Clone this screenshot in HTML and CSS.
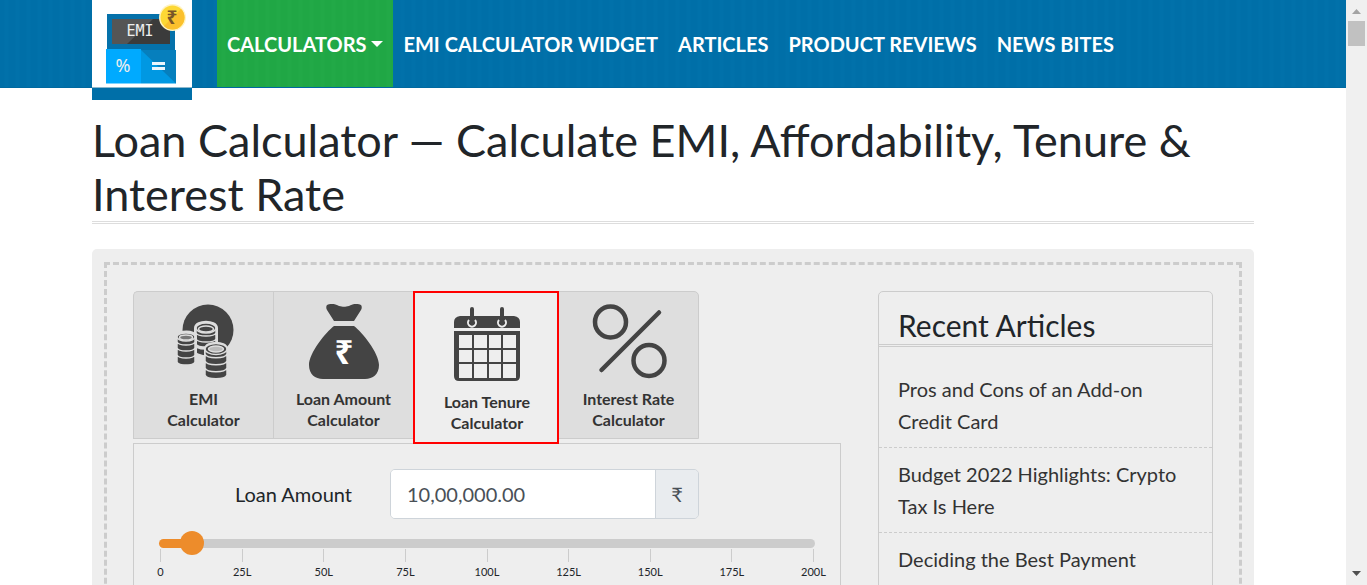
FILE: index.html
```html
<!DOCTYPE html>
<html lang="en">
<head>
<meta charset="utf-8">
<meta name="viewport" content="width=device-width, initial-scale=1">
<title>Loan Calculator</title>
<link rel="stylesheet" href="styles.css">
</head>
<body>
<div class="page">
  <header class="site-header">
    <div class="container header-row">
      <a class="brand" href="#" aria-label="EMI Calculator home">
        <svg class="brand-logo" viewBox="0 0 100 87" aria-hidden="true">
          <path fill="#0571aa" d="M15 14h68v36H15z"/>
          <path fill="#555" d="M20 19h58v25H20z"/>
          <path fill="#3b3b3b" d="M35 44l26-25h17v25z"/>
          <path fill="#00aaff" d="M14 49h35v34.500H14z"/>
          <path fill="#0098e2" d="M49 50h35v33.500H49z"/>
          <path fill="#067fbd" d="M49 50h35v33.500z"/>
          <path fill="#e9f6fd" d="M60 62h13v3H60zM60 67h13v3H60z"/>
          <circle cx="80.500" cy="17.500" r="13.500" fill="#fff3c4"/>
          <circle cx="80.500" cy="17.500" r="12" fill="#fdd835"/>
          <path fill="#fbc02d" d="M72 26a12 12 0 0 0 17-17z"/>
          <text class="logo-rupee" x="80" y="24">₹</text>
          <text class="logo-emi" x="48" y="36">EMI</text>
          <text class="logo-percent" x="31" y="72">%</text>
        </svg>
      </a>
      <nav class="main-nav">
        <a class="nav-link nav-active" href="#">CALCULATORS<span class="caret"></span></a>
        <a class="nav-link" href="#">EMI CALCULATOR WIDGET</a>
        <a class="nav-link" href="#">ARTICLES</a>
        <a class="nav-link" href="#">PRODUCT REVIEWS</a>
        <a class="nav-link" href="#">NEWS BITES</a>
      </nav>
    </div>
  </header>

  <main class="container">
    <h1 class="page-title">Loan Calculator — Calculate EMI, Affordability, Tenure &amp; Interest Rate</h1>
    <div class="card">
      <div class="card-inner">
        <section class="calculator">
          <div class="tabs">
            <button class="tab" type="button">
              <svg class="tab-icon" viewBox="0 0 76 76" aria-hidden="true">
                <circle cx="42" cy="26" r="25.500" fill="#444"/>
                <g fill="#444" stroke="#dedede" stroke-width="1.500">
                  <path stroke-width="4" d="M30 24c0-7 20-7 20 0v16c0 5-20 5-20 0z"/>
                  <path d="M30 36v4c2 4 18 4 20 0v-4M30 31v4c2 4 18 4 20 0v-4M30 24v5c2 4 18 4 20 0v-5"/>
                  <ellipse cx="40" cy="24" rx="10" ry="5"/>
                  <ellipse cx="40" cy="25" rx="7.500" ry="3"/>
                  <path stroke-width="4" d="M12 33c0-6 17-6 17 0v24c0 5-17 5-17 0z"/>
                  <path d="M11 52v6c2 4 16 4 18 0v-6M11 46v5c2 4 16 4 18 0v-5M11 39v5c2 4 16 4 18 0v-5M11 33v5c2 4 16 4 18 0v-5"/>
                  <ellipse cx="20" cy="33" rx="9" ry="4"/>
                  <ellipse cx="20" cy="33.500" rx="6.500" ry="2.500" fill="#777"/>
                  <path stroke-width="4" d="M40 45c0-7 20-7 20 0v25c0 6-20 6-20 0z"/>
                  <path d="M39 65v6c2 5 20 5 22 0v-6M39 58v6c2 5 20 5 22 0v-6M39 51v6c2 5 20 5 22 0v-6M39 45v5c2 5 20 5 22 0v-5"/>
                  <ellipse cx="50" cy="45" rx="11" ry="5.500"/>
                  <ellipse cx="50" cy="45" rx="7.500" ry="3" fill="#bbb"/>
                </g>
              </svg>
              <span>EMI<br>Calculator</span>
            </button>
            <button class="tab" type="button">
              <svg class="tab-icon" viewBox="0 0 76 76" aria-hidden="true">
                <path fill="#444" d="M21 1c5-2 8-1 12 1 4 1 6 1 10 0 4-2 7-3 12-1 1 1 1 3 0 5l-7 11H28L21 6c-1-2-1-4 0-5zM28 22h20c8 6 25 27 25 39 0 9-6 14-14 14H17C9 75 3 70 3 61c0-12 17-33 25-39z"/>
                <text class="bag-rupee" x="38" y="60">₹</text>
              </svg>
              <span>Loan Amount<br>Calculator</span>
            </button>
            <button class="tab tab-selected" type="button">
              <svg class="tab-icon" viewBox="0 0 76 76" aria-hidden="true">
                <path fill="#444" d="M11 9h54q6 1 6 6v6H5v-6q0-5 6-6z"/>
                <path fill="#444" fill-rule="evenodd" d="M5 24h66v45q0 5-5 5H10q-5 0-5-5zM10 28v13h13V28zM25 28v13h13V28zM40 28v13h12V28zM54 28v13h13V28zM10 43v12h13V43zM25 43v12h13V43zM40 43v12h12V43zM54 43v12h13V43zM10 57v14h13V57zM25 57v14h13V57zM40 57v14h12V57zM54 57v14h13V57z"/>
                <g fill="none" stroke="#eee" stroke-width="2">
                  <path d="M20 13a4 4 0 1 0 6 0M50 13a4 4 0 1 0 6 0"/>
                </g>
                <path d="M23 2v14M53 2v14" stroke="#444" stroke-width="4" stroke-linecap="round"/>
              </svg>
              <span>Loan Tenure<br>Calculator</span>
            </button>
            <button class="tab" type="button">
              <svg class="tab-icon" viewBox="0 0 76 76" aria-hidden="true">
                <g fill="none" stroke="#444" stroke-width="4.500" stroke-linecap="round">
                  <circle cx="19.500" cy="18" r="15.500"/>
                  <circle cx="58" cy="56.500" r="15.500"/>
                  <path d="M68 8.500L10.500 66"/>
                </g>
              </svg>
              <span>Interest Rate<br>Calculator</span>
            </button>
          </div>

          <form class="panel">
            <div class="field-row">
              <label class="field-label" for="amount">Loan Amount</label>
              <div class="input-group">
                <input class="amount" id="amount" type="text" value="10,00,000.00">
                <span class="addon">₹</span>
              </div>
            </div>
            <div class="slider">
              <div class="slider-track">
                <input class="slider-input" type="range" min="0" max="200" value="10" aria-label="Loan amount in lakhs">
              </div>
              <div class="scale">
                <span class="mark">0</span>
                <span class="mark">25L</span>
                <span class="mark">50L</span>
                <span class="mark">75L</span>
                <span class="mark">100L</span>
                <span class="mark">125L</span>
                <span class="mark">150L</span>
                <span class="mark">175L</span>
                <span class="mark">200L</span>
              </div>
            </div>
          </form>
        </section>

        <aside class="articles">
          <h3 class="articles-title">Recent Articles</h3>
          <ul class="article-list">
            <li class="article"><a href="#">Pros and Cons of an Add-on Credit Card</a></li>
            <li class="article"><a href="#">Budget 2022 Highlights: Crypto Tax Is Here</a></li>
            <li class="article"><a href="#">Deciding the Best Payment</a></li>
          </ul>
        </aside>
      </div>
    </div>
  </main>
</div>

<div class="scrollbar" aria-hidden="true">
  <svg class="scroll-arrow" viewBox="0 0 21 21"><path fill="#a3a3a3" d="M6 14l4.500-5 4.500 5z"/></svg>
  <div class="scroll-thumb"></div>
  <svg class="scroll-arrow scroll-down" viewBox="0 0 21 21"><path fill="#505050" d="M6 7l4.500 5L15 7z"/></svg>
</div>
</body>
</html>
```
FILE: styles.css
```css
* {
  box-sizing: border-box;
}

body {
  display: flex;
  height: 100vh;
  margin: 0;
  overflow: hidden;
  background: #fff;
  color: #212529;
  font: 20px/32px Lato, "Noto Sans", sans-serif;
}

a {
  color: inherit;
  text-decoration: none;
}

.page {
  flex: 1;
  min-width: 0;
  overflow-y: auto;
  scrollbar-width: none;
}

.container {
  max-width: 1162px;
  margin: 0 auto;
}

/* Header */
.site-header {
  height: 88px;
  background: repeating-linear-gradient(90deg, #006fa8 0 4px, #0171aa 5px 8px, #006fa8 9px 11px);
  border-bottom: 1px solid #0069a0;
}

.header-row {
  display: flex;
  gap: 25px;
  height: 87px;
}

.brand {
  flex: none;
  width: 100px;
  height: 100px;
  background: #006fa8;
}

.brand-logo {
  display: block;
  width: 100px;
  height: 87px;
  background: #fff;
  box-shadow: 0 1px #8db8cd;
}

.logo-emi,
.logo-percent,
.logo-rupee {
  fill: #eee;
  text-anchor: middle;
  font-family: "DejaVu Sans Mono", monospace;
  font-size: 15px;
}

.logo-percent {
  font-family: "Noto Sans", sans-serif;
  font-size: 18px;
}

.logo-rupee {
  fill: #795528;
  font-family: "Noto Sans", sans-serif;
  font-weight: 700;
  font-size: 19px;
}

.main-nav {
  display: flex;
}

.nav-link {
  display: flex;
  align-items: center;
  padding: 0 10px;
  color: #fff;
  font-weight: 700;
  white-space: nowrap;
}

.nav-active {
  background: repeating-linear-gradient(90deg, #20a745 0 4px, #22a947 5px 8px, #20a745 9px 11px);
}

.caret {
  margin-left: 5px;
  border: 6px solid transparent;
  border-top-color: #fff;
  border-bottom: 0;
}

/* Title */
.page-title {
  margin: 25px 0;
  border-bottom: 3px double #ddd;
  font-size: 45px;
  font-weight: 400;
  line-height: 54px;
}

/* Card */
.card {
  padding: 13px 12px;
  background: #eee;
  border-radius: 5px;
}

.card-inner {
  display: grid;
  grid-template-columns: minmax(0, 708fr) minmax(0, 335fr);
  gap: 37px;
  padding: 26px;
  border: 3px dashed #ccc;
}

/* Tabs */
.tabs {
  display: flex;
  align-items: flex-start;
  height: 152px;
}

.tab {
  display: flex;
  flex-direction: column;
  align-items: center;
  width: 140px;
  height: 148px;
  margin: 0;
  padding: 12px 0 0;
  border: 1px solid #ccc;
  border-right: 0;
  background: #dedede;
  color: #333;
  font: 700 16px/21px Lato, "Noto Sans", sans-serif;
}

.tab:first-child {
  border-radius: 5px 0 0 0;
}

.tab:last-child {
  width: 141px;
  border-right: 1px solid #ccc;
  border-radius: 0 5px 0 0;
}

.tab-icon {
  width: 76px;
  height: 76px;
  margin-bottom: 8px;
}

.tab-selected {
  position: relative;
  width: 146px;
  height: 153px;
  margin-right: -1px;
  padding: 14px 0 0 2px;
  border: 2px solid #f00;
  background: #eee;
}

.bag-rupee {
  fill: #fff;
  text-anchor: middle;
  font-family: "Noto Sans", sans-serif;
  font-weight: 700;
  font-size: 33px;
}

/* Panel */
.panel {
  min-height: 220px;
  padding: 25px;
  border: 1px solid #ccc;
}

.field-row {
  display: grid;
  grid-template-columns: 1fr 309px;
  gap: 38px;
  margin-right: 116px;
}

.field-label {
  align-self: center;
  text-align: right;
}

.input-group {
  display: flex;
  height: 50px;
  overflow: hidden;
  border: 1px solid #ced4da;
  border-radius: 5px;
  color: #495057;
}

.amount {
  flex: 1;
  min-width: 0;
  padding: 0 16px;
  border: 0;
  background: #fff;
  color: inherit;
  font: inherit;
}

.addon {
  display: grid;
  place-items: center;
  width: 43px;
  border-left: 1px solid #ced4da;
  background: #e9ecef;
}

/* Slider */
.slider {
  margin-top: 20px;
}

.slider-track {
  height: 9px;
  border-radius: 5px;
  background: linear-gradient(90deg, #ed8c2b 5%, #ccc 5%);
}

.slider-input {
  display: block;
  width: calc(100% + 24px);
  height: 24px;
  margin: 0 -12px;
  appearance: none;
  background: transparent;
  translate: 0 -8px;
}

.slider-input::-webkit-slider-thumb {
  width: 24px;
  height: 24px;
  appearance: none;
  border-radius: 50%;
  background: #ed8c2b;
}

.scale {
  display: flex;
  justify-content: space-between;
  margin: 0 1px;
}

.mark {
  display: flex;
  flex-direction: column;
  align-items: center;
  width: 1px;
  font-size: 11px;
  line-height: 20px;
}

.mark::before {
  flex: none;
  width: 1px;
  height: 13px;
  margin-top: 1px;
  background: #ccc;
  content: "";
}

/* Recent articles */
.articles {
  border: 1px solid #ccc;
  border-radius: 5px;
}

.articles-title {
  margin: 0 0 16px;
  padding: 15px 19px 1px;
  border-bottom: 3px double #ccc;
  font-size: 30px;
  font-weight: 400;
  line-height: 36px;
}

.article-list {
  margin: 0;
  padding: 0;
  list-style: none;
}

.article {
  padding: 10px 19px;
  border-bottom: 1px dashed #ccc;
  color: #333;
}

/* Scrollbar */
.scrollbar {
  display: flex;
  flex: none;
  flex-direction: column;
  align-items: center;
  width: 21px;
  background: #f0f0f0;
}

.scroll-arrow {
  width: 21px;
  height: 21px;
}

.scroll-thumb {
  width: 17px;
  height: 25px;
  background: #c1c1c1;
}

.scroll-down {
  margin-top: auto;
}
```
